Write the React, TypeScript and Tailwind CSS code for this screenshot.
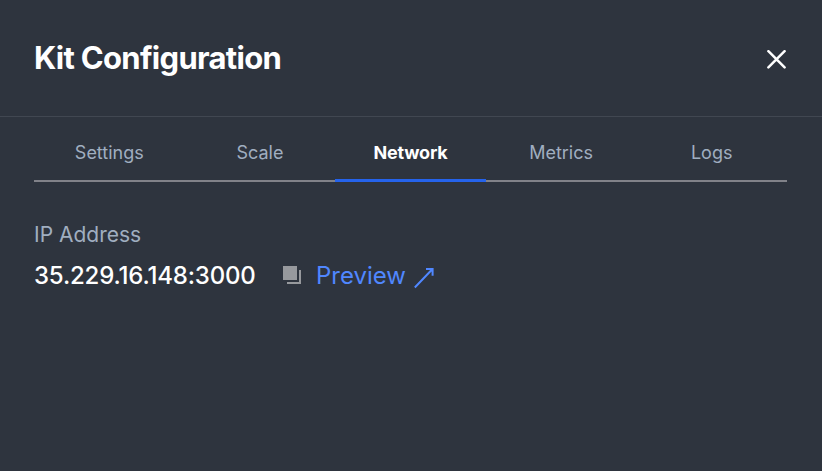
const tabs = ['Settings', 'Scale', 'Network', 'Metrics', 'Logs'];

export default function App() {
  return (
    <div className="h-[471px] w-[822px] overflow-hidden bg-[#2e343e] font-['Inter',sans-serif] text-white">
      <header className="flex h-[117px] items-center justify-between border-b border-[#414751] pr-[35px] pl-[34px]">
        <h1 className="text-[31px] leading-10 font-bold tracking-[-0.7px]">Kit Configuration</h1>
        <button aria-label="Close" className="pt-[3px]">
          <svg width="20" height="20" viewBox="0 0 20 20" fill="none" stroke="currentColor" strokeWidth="2.5" strokeLinecap="round">
            <path d="M1.4 1.2L17.6 17.4M17.6 1.2L1.4 17.4" />
          </svg>
        </button>
      </header>
      <nav className="mr-[35px] ml-[34px] grid h-[65px] grid-cols-5">
        {tabs.map((tab) => (
          <button
            key={tab}
            className={
              tab === 'Network'
                ? 'border-b-[3px] border-[#2563eb] pt-[9px] text-[18px] font-bold tracking-[-0.2px]'
                : 'border-b-2 border-[#818289] pt-[8px] text-[18px] text-[#a0aec0]'
            }
          >
            {tab}
          </button>
        ))}
      </nav>
      <main className="pt-[39px] pl-[34px]">
        <div className="text-[21px] leading-7 text-[#a0aec0]">IP Address</div>
        <div className="mt-[11px] flex items-center text-[24px] leading-8 font-medium">
          <span className="w-[222px] tracking-[-0.18px] whitespace-nowrap">35.229.16.148:3000</span>
          <svg className="mb-[2px] ml-[27px]" width="19" height="19" viewBox="0 0 19 19">
            <path d="M0 0h14v14H0z" fill="#97999d" />
            <path d="M17 4v13H4" fill="none" stroke="#97999d" strokeWidth="2" />
          </svg>
          <a className="ml-[14px] flex items-center font-normal text-[#5087ff]">
            Preview
            <svg className="mt-[4px] ml-[8px]" width="20" height="22" viewBox="0 0 20 22" fill="none" stroke="currentColor" strokeWidth="2">
              <path d="M0.8 20.5L18.5 2M12 2H18.6V8.8" />
            </svg>
          </a>
        </div>
      </main>
    </div>
  );
}
